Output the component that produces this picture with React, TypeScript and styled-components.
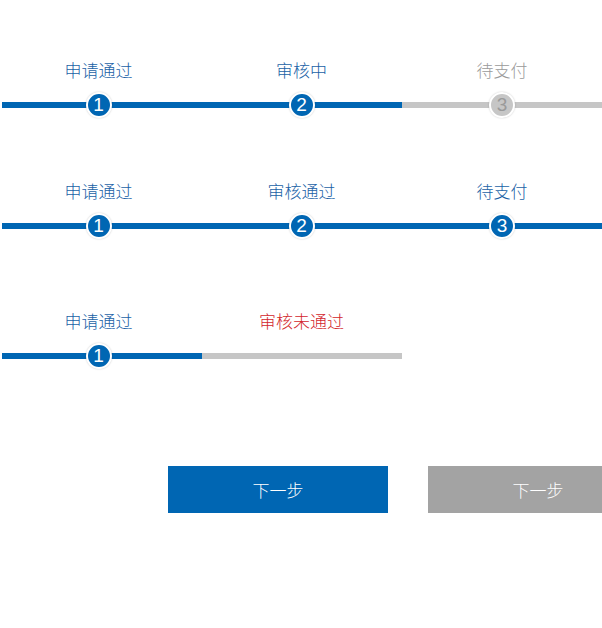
import styled, { createGlobalStyle } from 'styled-components';

type State = 'done' | 'todo' | 'fail';

interface StepData {
  label: string;
  state: State;
  line: 'blue' | 'grey';
  dot?: boolean;
}

const rows: { top: number; steps: StepData[] }[] = [
  {
    top: 59,
    steps: [
      { label: '申请通过', state: 'done', line: 'blue', dot: true },
      { label: '审核中', state: 'done', line: 'blue', dot: true },
      { label: '待支付', state: 'todo', line: 'grey', dot: true },
    ],
  },
  {
    top: 62,
    steps: [
      { label: '申请通过', state: 'done', line: 'blue', dot: true },
      { label: '审核通过', state: 'done', line: 'blue', dot: true },
      { label: '待支付', state: 'done', line: 'blue', dot: true },
    ],
  },
  {
    top: 71,
    steps: [
      { label: '申请通过', state: 'done', line: 'blue', dot: true },
      { label: '审核未通过', state: 'fail', line: 'grey' },
    ],
  },
];

// the first step sits a little left of its column centre in the design
const shiftFor = (i: number) => (i === 0 ? 7 : i === 1 ? 1 : 0);

const App = () => {
  return (
    <>
      <GlobalStyle />
      <Page>
        {rows.map((row, r) => (
          <StepRow key={r} $top={row.top}>
            {row.steps.map((step, i) => (
              <Step key={i}>
                <Label $state={step.state} $shift={shiftFor(i)}>
                  {step.label}
                </Label>
                <Track $line={step.line} $shift={shiftFor(i)}>
                  {step.dot && <Dot $active={step.state === 'done'}>{i + 1}</Dot>}
                </Track>
              </Step>
            ))}
          </StepRow>
        ))}
        <ButtonRow>
          <Button>下一步</Button>
          <Button $disabled>下一步</Button>
        </ButtonRow>
      </Page>
    </>
  );
};

export default App;

const GlobalStyle = createGlobalStyle`
  html, body {
    margin: 0;
    padding: 0;
    background: #fff;
    overflow: hidden;
  }
`;

const Page = styled.div`
  width: 602px;
  height: 628px;
  display: flex;
  flex-direction: column;
  overflow: hidden;
  font-family: "Noto Sans CJK SC", "Liberation Sans", sans-serif;
`;

const StepRow = styled.div<{ $top: number }>`
  display: flex;
  padding-left: 2px;
  margin-top: ${({ $top }) => $top}px;
`;

const Step = styled.div`
  width: 200px;
  display: flex;
  flex-direction: column;
  align-items: center;
  gap: 11px;
`;

const Label = styled.div<{ $state: State; $shift: number }>`
  font-size: 17px;
  font-weight: 300;
  line-height: 22px;
  margin-right: ${({ $shift }) => $shift}px;
  color: ${({ $state }) =>
    $state === 'done' ? '#1a62a6' : $state === 'fail' ? '#d3262c' : '#9a9a9a'};
`;

const Track = styled.div<{ $line: 'blue' | 'grey'; $shift: number }>`
  box-sizing: border-box;
  width: 100%;
  height: 26px;
  padding-right: ${({ $shift }) => $shift}px;
  display: flex;
  justify-content: center;
  align-items: center;
  background: linear-gradient(
      ${({ $line }) => ($line === 'blue' ? '#0066b3' : '#c6c6c6')},
      ${({ $line }) => ($line === 'blue' ? '#0066b3' : '#c6c6c6')}
    )
    center / 100% 6px no-repeat;
`;

const Dot = styled.div<{ $active: boolean }>`
  width: 22px;
  height: 22px;
  border-radius: 50%;
  border: 2px solid #fff;
  box-shadow: 0 0 2px rgba(0, 0, 0, 0.2);
  background: ${({ $active }) => ($active ? '#0066b3' : '#c6c6c6')};
  color: ${({ $active }) => ($active ? '#fff' : '#9a9a9a')};
  font-family: "Liberation Sans", sans-serif;
  font-size: 19px;
  line-height: 22px;
  text-align: center;
`;

const ButtonRow = styled.div`
  display: flex;
  gap: 40px;
  margin-top: 97px;
  padding-left: 168px;
`;

const Button = styled.div<{ $disabled?: boolean }>`
  flex: none;
  width: 220px;
  height: 47px;
  display: flex;
  justify-content: center;
  align-items: center;
  font-size: 17px;
  font-weight: 300;
  color: #fff;
  background: ${({ $disabled }) => ($disabled ? '#a3a3a3' : '#0066b3')};
`;
